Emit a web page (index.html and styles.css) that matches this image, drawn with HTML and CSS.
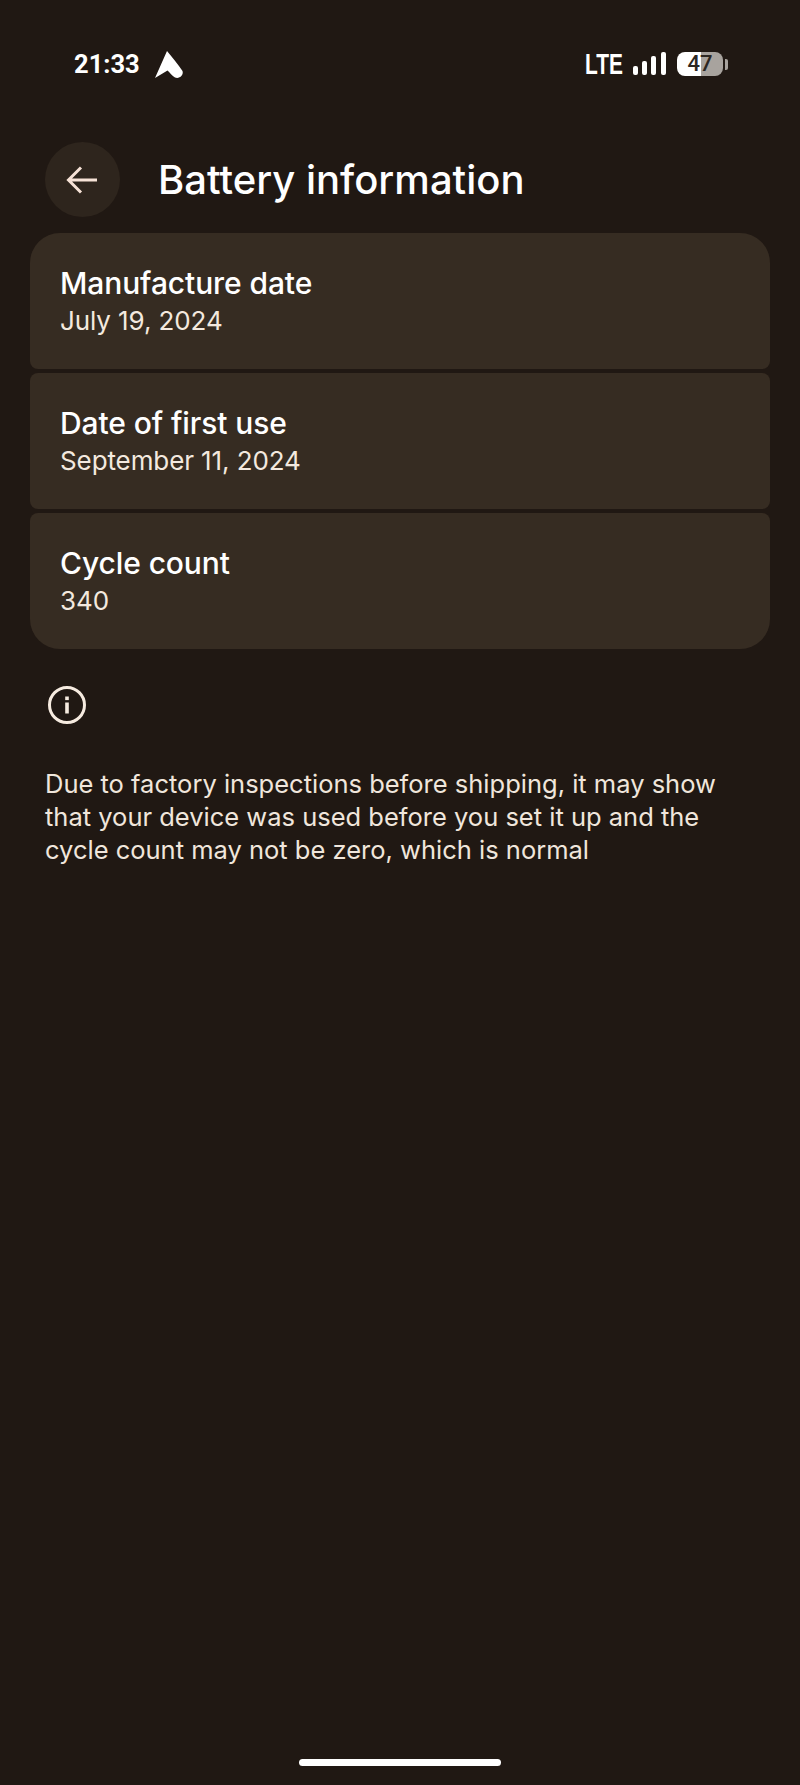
FILE: index.html
```html
<!DOCTYPE html>
<html lang="en">
<head>
<meta charset="utf-8">
<title>Battery information</title>
<link rel="stylesheet" href="styles.css">
</head>
<body>
<div class="screen">
  <div class="status">
    <div class="status-left">
      <span class="time">21:33</span>
      <svg class="nav-icon" width="30" height="30" viewBox="0 0 30 30"><path d="M13 1 L1 28 L13.5 20.5 C16 23 18 25.5 21 27.5 C25 29.5 30 25 28.5 21 C24 14 18.5 8 13 1 Z" fill="#fff"/></svg>
    </div>
    <div class="status-right">
      <span class="lte">LTE</span>
      <svg class="signal" width="33" height="24" viewBox="0 0 33 24"><rect x="0" y="14" width="5" height="9" rx="2" fill="#fff"/><rect x="9" y="9" width="5" height="14" rx="2" fill="#fff"/><rect x="18" y="4" width="5" height="19" rx="2" fill="#fff"/><rect x="28" y="0" width="5" height="23" rx="2" fill="#fff"/></svg>
      <div class="battery"><div class="battery-body"><span class="battery-text">47</span></div><div class="battery-tip"></div></div>
    </div>
  </div>
  <header class="appbar">
    <div class="back">
      <svg width="36" height="36" viewBox="0 0 36 36"><path d="M32 18 H5 M16 5.5 L3.5 18 L16 30.5" fill="none" stroke="#f6e2d6" stroke-width="3"/></svg>
    </div>
    <h1 class="title">Battery information</h1>
  </header>
  <section class="list">
    <div class="card first"><div class="label">Manufacture date</div><div class="value">July 19, 2024</div></div>
    <div class="card"><div class="label">Date of first use</div><div class="value">September 11, 2024</div></div>
    <div class="card last"><div class="label">Cycle count</div><div class="value">340</div></div>
  </section>
  <section class="note">
    <svg class="info" width="40" height="40" viewBox="0 0 40 40"><circle cx="20" cy="20" r="17.5" fill="none" stroke="#f6ebe0" stroke-width="3"/><rect x="18.2" y="17.5" width="3.6" height="11" fill="#f6ebe0"/><rect x="18.2" y="11.5" width="3.6" height="3.6" fill="#f6ebe0"/></svg>
    <p class="note-text">Due to factory inspections before shipping, it may show that your device was used before you set it up and the cycle count may not be zero, which is normal</p>
  </section>
  <div class="spacer"></div>
  <div class="home-wrap"><div class="home"></div></div>
</div>
</body>
</html>
```

FILE: styles.css
```css
* { box-sizing: border-box; }
html, body { margin: 0; padding: 0; background: #201813; }
body { font-family: Inter, Roboto, sans-serif; color: #fff; }
.screen { width: 800px; height: 1785px; display: flex; flex-direction: column; }
.status { height: 142px; padding: 45px 73px 0 74px; display: flex; justify-content: space-between; align-items: flex-start; }
.status-left { display: flex; align-items: center; gap: 14px; height: 38px; }
.time { font-family: Roboto, sans-serif; font-size: 25.5px; font-weight: 700; }
.nav-icon { display: block; margin-top: 2px; }
.status-right { display: flex; align-items: center; height: 38px; gap: 11px; margin-right: -1px; }
.lte { width: 37px; font-size: 29px; line-height: 38px; font-weight: 700; font-family: "Liberation Sans", sans-serif; transform: scaleX(.72); transform-origin: left center; white-space: nowrap; }
.signal { display: block; }
.battery { display: flex; align-items: center; gap: 2px; }
.battery-body { width: 46px; height: 24px; border-radius: 8px; background: linear-gradient(90deg, #fff 0 24px, #a8a39e 24px); text-align: center; }
.battery-text { display: block; font-family: Roboto, sans-serif; font-size: 22px; line-height: 24px; font-weight: 500; color: #2b2622; }
.battery-tip { width: 3px; height: 11px; background: #a8a39e; border-radius: 0 2px 2px 0; }
.appbar { height: 91px; padding: 0 45px; display: flex; align-items: flex-start; gap: 38px; }
.back { width: 75px; height: 75px; border-radius: 50%; background: #2e251d; display: flex; align-items: center; justify-content: center; }
.title { margin: 0; font-size: 40px; font-weight: 500; line-height: 75px; color: #fff; white-space: nowrap; }
.list { padding: 0 30px; display: flex; flex-direction: column; gap: 4px; }
.card { height: 136px; background: #362c22; border-radius: 8px; padding: 31px 30px 0; }
.card.first { border-radius: 30px 30px 8px 8px; }
.card.last { border-radius: 8px 8px 30px 30px; }
.label { font-size: 30px; line-height: 38px; font-weight: 500; letter-spacing: -.1px; color: #fff; }
.value { font-size: 26px; line-height: 38px; color: #f3e9df; letter-spacing: -.1px; }
.note { padding: 36px 60px 0 45px; }
.info { display: block; margin-bottom: 42px; margin-left: 2px; }
.note-text { margin: 0; font-size: 25.5px; line-height: 33px; color: #f0e6dc; }
.spacer { flex: 1; }
.home-wrap { height: 26px; display: flex; justify-content: center; align-items: flex-start; }
.home { width: 202px; height: 7px; border-radius: 4px; background: #fff; }
```
